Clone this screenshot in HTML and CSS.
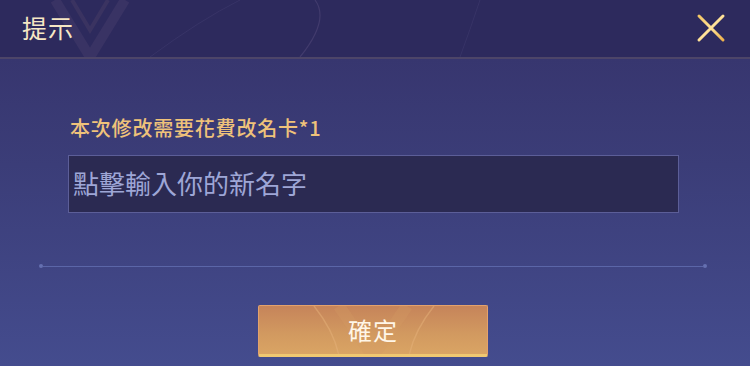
FILE: index.html
```html
<!DOCTYPE html>
<html lang="zh-Hant">
<head>
<meta charset="utf-8">
<link rel="stylesheet" href="styles.css">
</head>
<body>
<div class="dialog">
  <header class="header">
    <svg class="deco" width="750" height="57" viewBox="0 0 750 57">
      <path d="M55 0 L90 57 L125 0" fill="none" stroke="#4a3f6c" stroke-width="10" opacity="0.45"/>
      <path d="M72 0 L90 30 L108 0" fill="none" stroke="#5a4a6a" stroke-width="4" opacity="0.3"/>
      <path d="M300 57 Q330 20 315 0" fill="none" stroke="#5a5080" stroke-width="1.2" opacity="0.45"/>
      <path d="M150 57 Q200 20 240 0" fill="none" stroke="#4a4478" stroke-width="1" opacity="0.35"/>
      <path d="M480 0 Q470 30 460 57" fill="none" stroke="#4a4478" stroke-width="1" opacity="0.35"/>
    </svg>
    <h1 class="title">提示</h1>
    <button class="close" aria-label="close">
      <svg width="30" height="30" viewBox="0 0 30 30">
        <defs>
          <linearGradient id="cg" x1="0" y1="0" x2="1" y2="1">
            <stop offset="0" stop-color="#f3c664"/>
            <stop offset="0.5" stop-color="#ffe39a"/>
            <stop offset="1" stop-color="#eeb24c"/>
          </linearGradient>
        </defs>
        <path d="M3 3 L27 27 M27 3 L3 27" stroke="url(#cg)" stroke-width="3" stroke-linecap="round"/>
      </svg>
    </button>
  </header>
  <main class="content">
    <p class="label">本次修改需要花費改名卡*1</p>
    <div class="input">點擊輸入你的新名字</div>
    <div class="divider"><span class="dot"></span><span class="line"></span><span class="dot"></span></div>
    <div class="actions">
      <button class="confirm">
        <svg class="btn-deco" width="228" height="50" viewBox="0 0 228 50">
          <path d="M55 0 Q75 25 80 50" fill="none" stroke="#e6b27a" stroke-width="1.5" opacity="0.5"/>
          <path d="M80 0 L114 50 L148 0" fill="none" stroke="#d49a62" stroke-width="12" opacity="0.3"/>
          <path d="M175 0 Q155 25 150 50" fill="none" stroke="#e6b27a" stroke-width="1.5" opacity="0.5"/>
        </svg>
        <span class="btn-text">確定</span>
      </button>
    </div>
  </main>
</div>
</body>
</html>
```
FILE: styles.css
```css
* { box-sizing: border-box; }
html, body { margin: 0; padding: 0; }
body {
  width: 750px;
  height: 366px;
  overflow: hidden;
  font-family: "Noto Sans CJK TC", "Noto Sans", sans-serif;
}
.dialog {
  width: 750px;
  height: 366px;
  display: flex;
  flex-direction: column;
  background: linear-gradient(180deg, #35326a 0%, #3b3d78 45%, #444c8e 100%);
}
.header {
  position: relative;
  height: 59px;
  flex: none;
  display: flex;
  align-items: center;
  justify-content: space-between;
  padding: 0 24px 2px 22px;
  background: #2d2a5d;
  border-bottom: 2px solid #4d4568;
}
.deco {
  position: absolute;
  left: 0;
  top: 0;
}
.title {
  position: relative;
  margin: 0;
  font-size: 25px;
  font-weight: 400;
  line-height: 1;
  color: #f6e7c4;
  letter-spacing: 1px;
}
.close {
  position: relative;
  width: 30px;
  height: 30px;
  padding: 0;
  border: 0;
  background: none;
  display: flex;
}
.content {
  flex: 1;
  display: flex;
  flex-direction: column;
}
.label {
  margin: 58px 0 0 70px;
  font-size: 20px;
  line-height: 22px;
  color: #efc27a;
  font-weight: 500;
  letter-spacing: 0.8px;
}
.input {
  margin: 16px 0 0 68px;
  width: 611px;
  height: 58px;
  background: #2b2a52;
  border: 1px solid #5c5e98;
  color: #9ea6d6;
  font-size: 26px;
  line-height: 1;
  display: flex;
  align-items: center;
  padding-left: 4px;
  padding-bottom: 2px;
}
.divider {
  margin: 51px 0 0 39px;
  width: 668px;
  height: 4px;
  display: flex;
  align-items: center;
}
.line {
  flex: 1;
  height: 1px;
  background: #5b66a8;
}
.dot {
  width: 4px;
  height: 4px;
  border-radius: 50%;
  background: #6570b0;
}
.actions {
  display: flex;
  justify-content: center;
  margin-top: 37px;
  padding-right: 4px;
}
.confirm {
  position: relative;
  width: 230px;
  height: 52px;
  padding: 0;
  border: 1px solid #e3a26c;
  border-bottom: 3px solid #f0c872;
  border-radius: 2px;
  background: linear-gradient(180deg, #c6845a 0%, #d29a60 60%, #daa464 100%);
  display: flex;
  align-items: center;
  justify-content: center;
  overflow: hidden;
}
.btn-deco {
  position: absolute;
  left: 0;
  top: 0;
}
.btn-text {
  position: relative;
  font-family: "Noto Sans CJK TC", sans-serif;
  font-size: 24px;
  color: #fff6e8;
  letter-spacing: 1px;
  line-height: 1;
}
```
